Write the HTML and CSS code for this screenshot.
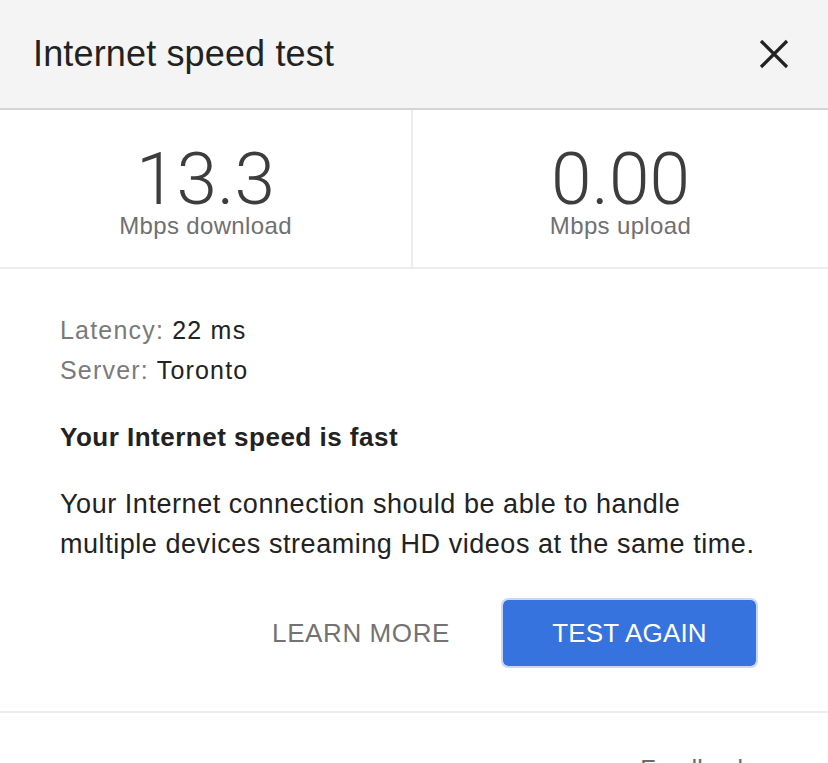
FILE: index.html
```html
<!DOCTYPE html>
<html lang="en">
<head>
<meta charset="utf-8">
<title>Internet speed test</title>
<link rel="stylesheet" href="styles.css">
</head>
<body>
<div class="panel">
  <header class="header">
    <h1 class="title">Internet speed test</h1>
    <button class="close" aria-label="Close">
      <svg width="30" height="30" viewBox="0 0 30 30"><path d="M2 2 L28 28 M28 2 L2 28" stroke="#222" stroke-width="3.2" fill="none"/></svg>
    </button>
  </header>
  <section class="stats">
    <div class="stat stat-left">
      <div class="num">13.3</div>
      <div class="unit">Mbps download</div>
    </div>
    <div class="stat">
      <div class="num">0.00</div>
      <div class="unit">Mbps upload</div>
    </div>
  </section>
  <section class="details">
    <div class="meta"><span class="label">Latency:</span> 22 ms</div>
    <div class="meta"><span class="label">Server:</span> Toronto</div>
    <h2 class="verdict">Your Internet speed is fast</h2>
    <p class="desc">Your Internet connection should be able to handle<br>multiple devices streaming HD videos at the same time.</p>
    <div class="actions">
      <button class="btn-text">LEARN MORE</button>
      <button class="btn-primary">TEST AGAIN</button>
    </div>
  </section>
  <footer class="footer">
    <span class="feedback">Feedback</span>
  </footer>
</div>
</body>
</html>
```

FILE: styles.css
```css
html, body {
  margin: 0;
  padding: 0;
  background: #ffffff;
}
body {
  font-family: "Liberation Sans", Helvetica, Arial, sans-serif;
  color: #222;
  overflow: hidden;
}
.panel {
  width: 828px;
}
.header {
  height: 108px;
  background: #f4f4f4;
  border-bottom: 2px solid #d4d4d4;
  display: flex;
  align-items: center;
  justify-content: space-between;
  padding: 0 39px 0 33px;
  box-sizing: content-box;
}
.title {
  margin: 0;
  font-size: 36px;
  font-weight: normal;
  color: #222;
  letter-spacing: 0.15px;
}
.close {
  border: 0;
  background: none;
  padding: 0;
  width: 30px;
  height: 30px;
  display: flex;
}
.stats {
  display: grid;
  grid-template-columns: 413px 1fr;
  height: 157px;
  border-bottom: 2px solid #ececec;
}
.stat {
  display: flex;
  flex-direction: column;
  align-items: center;
  padding-top: 37px;
}
.stat-left {
  border-right: 2px solid #ececec;
}
.num {
  font-family: Roboto, "Liberation Sans", sans-serif;
  font-weight: 300;
  font-size: 73px;
  line-height: 64px;
  color: #3d3d3d;
}
.unit {
  font-size: 24px;
  line-height: 28px;
  color: #707070;
  letter-spacing: 0.35px;
  margin-top: 1px;
}
.details {
  padding: 41px 0 43px 60px;
  border-bottom: 2px solid #ececec;
}
.meta {
  font-size: 25px;
  line-height: 40px;
  color: #222;
  letter-spacing: 1.2px;
}
.label {
  color: #7a7a7a;
}
.verdict {
  margin: 27px 0 0;
  font-size: 26px;
  line-height: 40px;
  font-weight: bold;
  color: #222;
  letter-spacing: 0.5px;
}
.desc {
  margin: 27px 0 0;
  font-size: 27px;
  line-height: 40px;
  color: #222;
  letter-spacing: 0.55px;
}
.actions {
  display: flex;
  justify-content: flex-end;
  align-items: center;
  gap: 26px;
  margin-top: 34px;
  padding-right: 70px;
}
.btn-text {
  border: 0;
  background: none;
  font-family: inherit;
  font-size: 26px;
  color: #737373;
  letter-spacing: 0.6px;
  padding: 0 25px;
  height: 69px;
}
.btn-primary {
  border: 2px solid #c9d9f3;
  background: #3673de;
  background-clip: padding-box;
  color: #fff;
  font-family: inherit;
  font-size: 26px;
  letter-spacing: 0.2px;
  width: 257px;
  height: 70px;
  border-radius: 7px;
  padding: 0;
}
.footer {
  display: flex;
  justify-content: flex-end;
  padding: 36px 78px 0 0;
}
.feedback {
  font-size: 25px;
  line-height: 40px;
  color: #6a6a6a;
}
```
